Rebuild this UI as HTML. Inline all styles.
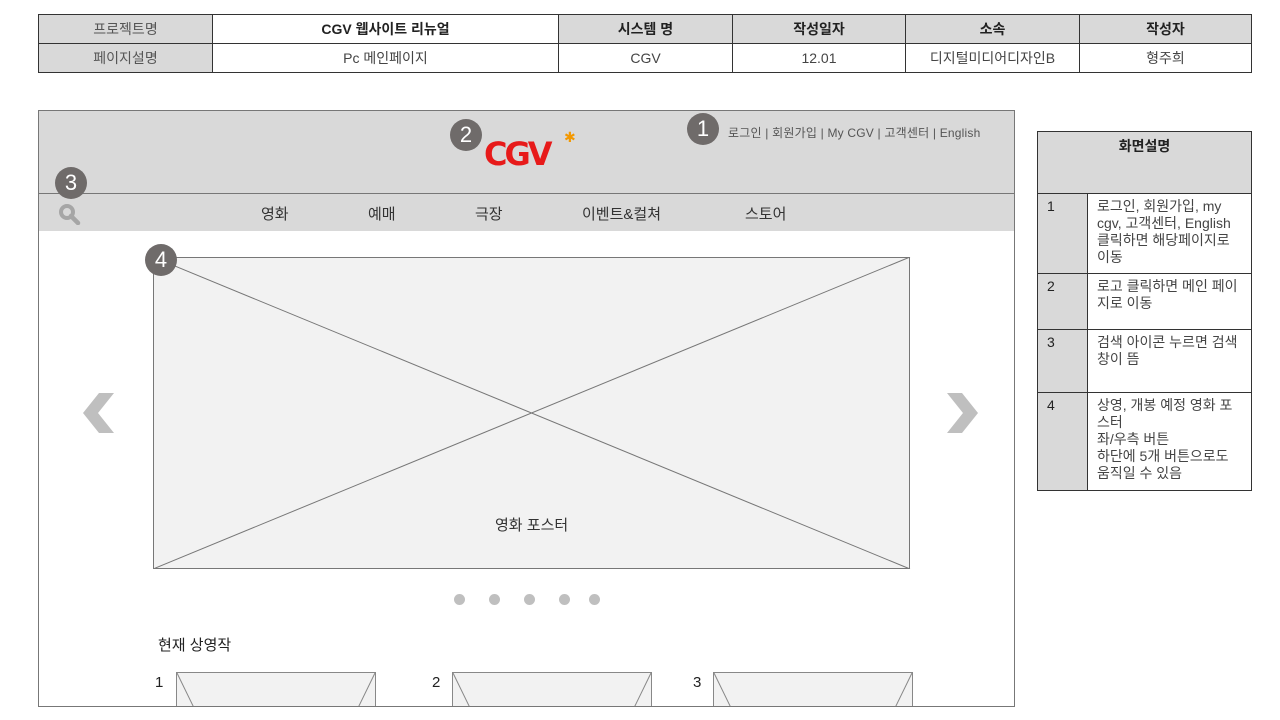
<!DOCTYPE html>
<html><head><meta charset="utf-8"><style>
*{margin:0;padding:0;box-sizing:border-box}
body{width:1280px;height:720px;background:#fff;position:relative;overflow:hidden;font-family:"Liberation Sans","Noto Sans CJK KR",sans-serif;color:#222}
.a{position:absolute}
table{border-collapse:collapse;position:absolute}
td{border:1px solid #333;text-align:center;font-size:14px}
.g{background:#d9d9d9}
.circ{position:absolute;width:32px;height:32px;border-radius:50%;background:#6f6b6a;color:#fff;font-size:22px;text-align:center;line-height:32px}
.nav{position:absolute;top:203px;font-size:15px;color:#333}
.dot{position:absolute;top:594px;width:11px;height:11px;border-radius:50%;background:#bfbfbf}
</style></head><body>
<table style="left:38px;top:14px;width:1214px">
<tr style="height:29px"><td class="g" style="width:174px;color:#555">프로젝트명</td><td style="width:346px;font-weight:bold">CGV 웹사이트 리뉴얼</td><td class="g" style="width:174px;font-weight:bold">시스템 명</td><td class="g" style="width:173px;font-weight:bold">작성일자</td><td class="g" style="width:174px;font-weight:bold">소속</td><td class="g" style="font-weight:bold">작성자</td></tr>
<tr style="height:29px"><td class="g" style="color:#555">페이지설명</td><td style="color:#444">Pc 메인페이지</td><td style="color:#444">CGV</td><td style="color:#444">12.01</td><td style="color:#444">디지털미디어디자인B</td><td style="color:#444">형주희</td></tr>
</table>

<div class="a" style="left:38px;top:110px;width:977px;height:597px;border:1px solid #777;overflow:hidden">
 <div class="a" style="left:0;top:0;width:975px;height:83px;background:#d9d9d9;border-bottom:1px solid #777"></div>
 <div class="a" style="left:0;top:83px;width:975px;height:37px;background:#d9d9d9"></div>
 <svg class="a" style="left:114px;top:146px" width="862" height="312"><rect x="0.5" y="0.5" width="756" height="311" fill="#f2f2f2" stroke="#777"/><line x1="0" y1="0" x2="757" y2="312" stroke="#777"/><line x1="757" y1="0" x2="0" y2="312" stroke="#777"/></svg>
 <svg class="a" style="left:137px;top:561px" width="800" height="40">
  <g fill="#f2f2f2" stroke="#888"><rect x="0.5" y="0.5" width="199" height="50"/><rect x="276.5" y="0.5" width="199" height="50"/><rect x="537.5" y="0.5" width="199" height="50"/></g>
  <g stroke="#888"><line x1="1" y1="1" x2="20" y2="40"/><line x1="199" y1="1" x2="180" y2="40"/><line x1="277" y1="1" x2="296" y2="40"/><line x1="475" y1="1" x2="456" y2="40"/><line x1="538" y1="1" x2="557" y2="40"/><line x1="736" y1="1" x2="717" y2="40"/></g>
 </svg>
</div>

<div class="a" style="left:728px;top:124px;font-size:12px;color:#555;letter-spacing:0.2px">로그인 | 회원가입 | My CGV | 고객센터 | English</div>
<div class="circ" style="left:687px;top:113px">1</div>
<div class="circ" style="left:450px;top:119px">2</div>
<div class="circ" style="left:55px;top:167px">3</div>
<div class="circ" style="left:145px;top:244px">4</div>
<div class="a" style="left:484px;top:137px;font-family:'DejaVu Sans',sans-serif;font-size:32px;font-weight:bold;color:#e71a1a;letter-spacing:-3px;line-height:34px">CGV</div>
<div class="a" style="left:564px;top:130px;font-size:14px;color:#f39800;line-height:14px">✱</div>
<svg class="a" style="left:58px;top:203px" width="24" height="22"><circle cx="9" cy="9" r="6" fill="none" stroke="#a6a6a6" stroke-width="4"/><line x1="13" y1="13" x2="20" y2="20" stroke="#a6a6a6" stroke-width="4.5" stroke-linecap="round"/></svg>
<div class="nav" style="left:261px">영화</div>
<div class="nav" style="left:368px">예매</div>
<div class="nav" style="left:475px">극장</div>
<div class="nav" style="left:582px">이벤트&amp;컬쳐</div>
<div class="nav" style="left:745px">스토어</div>
<svg class="a" style="left:82px;top:392px" width="34" height="42"><polygon points="17,1 32,1 16,21 32,41 17,41 1,21" fill="#bfbfbf"/></svg>
<svg class="a" style="left:945px;top:392px" width="34" height="42"><polygon points="17,1 2,1 18,21 2,41 17,41 33,21" fill="#bfbfbf"/></svg>
<div class="a" style="left:495px;top:514px;font-size:15px;color:#333">영화 포스터</div>
<div class="dot" style="left:454px"></div><div class="dot" style="left:489px"></div><div class="dot" style="left:524px"></div><div class="dot" style="left:559px"></div><div class="dot" style="left:589px"></div>
<div class="a" style="left:158px;top:634px;font-size:15px;color:#222">현재 상영작</div>
<div class="a" style="left:155px;top:674px;font-size:15px">1</div>
<div class="a" style="left:432px;top:674px;font-size:15px">2</div>
<div class="a" style="left:693px;top:674px;font-size:15px">3</div>

<table style="left:1037px;top:131px;width:215px;font-size:14px">
<tr style="height:62px"><td colspan="2" class="g" style="font-weight:bold;vertical-align:top;padding-top:4px">화면설명</td></tr>
<tr style="height:80px"><td class="g" style="width:50px;text-align:left;vertical-align:top;padding:4px 9px">1</td><td style="text-align:left;vertical-align:top;padding:4px 9px;line-height:17px;color:#444">로그인, 회원가입, my cgv, 고객센터, English 클릭하면 해당페이지로 이동</td></tr>
<tr style="height:56px"><td class="g" style="text-align:left;vertical-align:top;padding:4px 9px">2</td><td style="text-align:left;vertical-align:top;padding:4px 9px;line-height:17px;color:#444">로고 클릭하면 메인 페이지로 이동</td></tr>
<tr style="height:63px"><td class="g" style="text-align:left;vertical-align:top;padding:4px 9px">3</td><td style="text-align:left;vertical-align:top;padding:4px 9px;line-height:17px;color:#444">검색 아이콘 누르면 검색창이 뜸</td></tr>
<tr style="height:98px"><td class="g" style="text-align:left;vertical-align:top;padding:4px 9px">4</td><td style="text-align:left;vertical-align:top;padding:4px 9px;line-height:17px;color:#444">상영, 개봉 예정 영화 포스터<br>좌/우측 버튼<br>하단에 5개 버튼으로도 움직일 수 있음</td></tr>
</table>
</body></html>
